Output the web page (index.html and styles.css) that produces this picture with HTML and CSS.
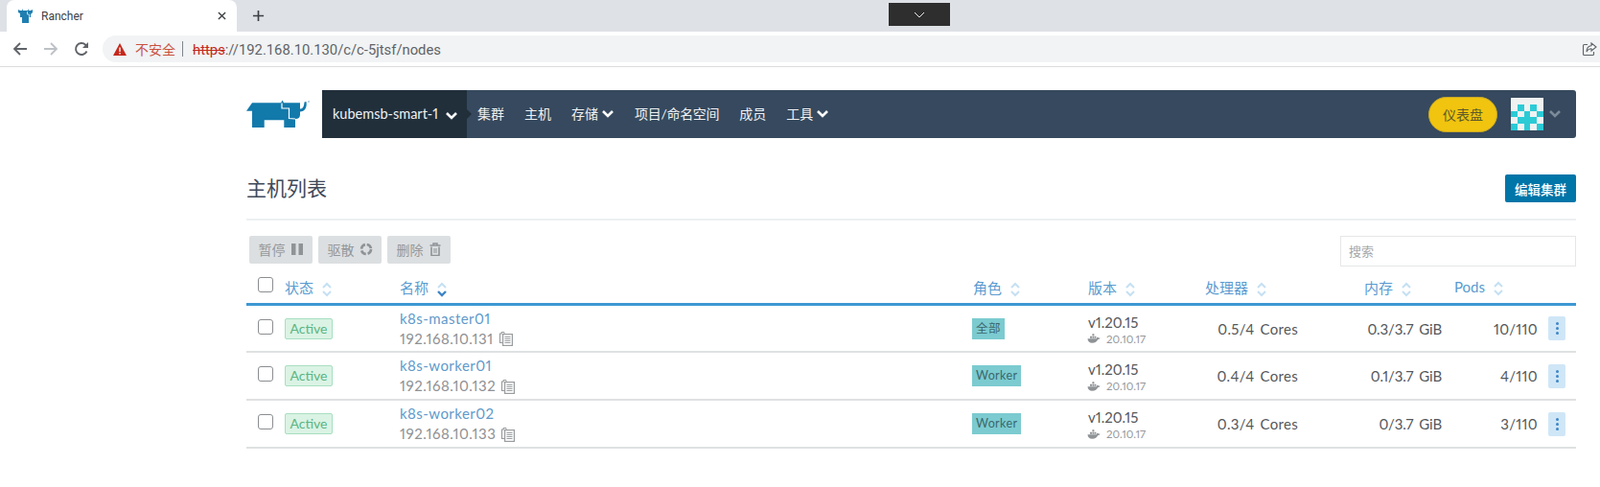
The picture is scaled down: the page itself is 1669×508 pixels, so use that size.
FILE: index.html
```html
<!DOCTYPE html>
<html lang="en">
<head>
    <meta charset="UTF-8">
    <meta name="viewport" content="width=device-width, initial-scale=1.0">
    <title>Rancher</title>
    <link rel="stylesheet" href="styles.css">
</head>
<body>
    <svg class="defs" width="0" height="0">
        <symbol id="sort" viewBox="0 0 12 16"><path d="M2 6l4-4 4 4M2 10l4 4 4-4" fill="none" stroke="currentColor" stroke-width="2"/></symbol>
        <symbol id="chev" viewBox="0 0 14 10"><path d="M2 2l5 5 5-5" fill="none" stroke="currentColor" stroke-width="2.6"/></symbol>
        <symbol id="copy" viewBox="0 0 15 16"><path d="M4 3H1.5v9.5H4" fill="none" stroke="#9a9d9f" stroke-width="1.2"/><path d="M3 3V1.5h3V3" fill="none" stroke="#9a9d9f"/><rect x="4.6" y="3.6" width="9.8" height="11.8" fill="#fff" stroke="#9a9d9f" stroke-width="1.2"/><path d="M6.5 6.5h6M6.5 8.5h6M6.5 10.5h6M6.5 12.5h6" stroke="#9a9d9f"/></symbol>
        <symbol id="whale" viewBox="0 0 14 10"><path d="M.5 5.2h9.3c.3-1 .9-1.5 1.7-1.3.2.5.9.7 2 .6-.4 1-1.2 1.5-2.2 1.6C10.300 8.400 8.300 9.800 5.300 9.800 2.300 9.800.8 8 .5 5.200z" fill="#8f9396"/><path d="M3 2.700h2v2H3zM5.400 2.700h2v2h-2zM5.400.3h2v2h-2zM7.800 2.700h1.600v2H7.800z" fill="#8f9396"/></symbol>
    </svg>

    <!-- browser chrome -->
    <div class="tabstrip">
        <div class="tab">
            <svg class="favicon" viewBox="0 0 16 16"><path d="M0 1l2 1h2V0l1 2h5l1-2v2h2l2-1v3l-2 2v3h-2v6H4V9H2V5L0 4z" fill="#1f7fb0"/><path d="M9.500 3v3h2v3" fill="none" stroke="#fff" stroke-width=".7"/></svg>
            <span class="tab-title">Rancher</span>
            <svg class="tab-close" viewBox="0 0 10 10"><path d="M1 1l8 8M9 1l-8 8" stroke="#3c4043" stroke-width="1.500"/></svg>
        </div>
        <svg class="newtab" viewBox="0 0 14 14"><path d="M7 1v12M1 7h12" stroke="#3c4043" stroke-width="1.800"/></svg>
        <div class="fullscreen-tab"><svg viewBox="0 0 12 7" width="12" height="7"><path d="M1 1l5 5 5-5" fill="none" stroke="#eee" stroke-width="1"/></svg></div>
    </div>
    <div class="toolbar">
        <svg class="tool back" viewBox="0 0 16 16"><path d="M15 8H2M8 2L2 8l6 6" fill="none" stroke="#5f6368" stroke-width="1.800"/></svg>
        <svg class="tool forward" viewBox="0 0 16 16"><path d="M1 8h13M8 2l6 6-6 6" fill="none" stroke="#bdc1c6" stroke-width="1.800"/></svg>
        <svg class="tool reload" viewBox="0 0 16 16"><path d="M13.500 10.500A6 6 0 1 1 12.200 3.700L14 5.500" fill="none" stroke="#5f6368" stroke-width="1.900"/><path d="M15 1v6H9z" fill="#5f6368"/></svg>
        <div class="omnibox">
            <svg class="warn" viewBox="0 0 14 13"><path d="M7 0l7 13H0z" fill="#c5291c"/><path d="M6.300 4.500h1.400v4.500H6.300zM6.300 10h1.400v1.500H6.300z" fill="#fff"/></svg>
            <span class="insecure">不安全</span>
            <span class="omni-sep"></span>
            <span class="url"><s class="scheme">https</s>://192.168.10.130/c/c-5jtsf/nodes</span>
            <svg class="share" viewBox="0 0 16 15"><path d="M6 2.500H2.500a1 1 0 0 0-1 1v9a1 1 0 0 0 1 1h9a1 1 0 0 0 1-1V10" fill="none" stroke="#5f6368" stroke-width="1.100"/><path d="M10 1l5 4-5 4V6.700C7.500 6.700 6 7.800 5 10c0-3.500 1.800-6 5-6.300z" fill="#fff" stroke="#5f6368" stroke-width="1.100"/></svg>
        </div>
    </div>

    <div class="page">
        <div class="topbar">
            <div class="logo-wrap">
                <svg class="logo" viewBox="0 0 66 31">
                    <path d="M0 12.700L6 4.300H36L37.700 1.500 39 4.300H56V10.500C58.500 10.500 60 9 60.500 3.500L62.500 3C63.500 9 61 13.500 56 13.500V16.500Q56 21 51 21V30H39.300V22.300H18.700V30H6V12.700z" fill="#1279ab"/>
                    <path d="M37 4.500V10H44.500V20.500L51 21" fill="none" stroke="#fff" stroke-width="1.200"/>
                    <circle cx="65" cy="3" r="1" fill="#a9c9dc"/>
                </svg>
            </div>
            <nav class="navbar">
                <div class="cluster">
                    <span>kubemsb-smart-1</span>
                    <svg class="chev"><use href="#chev"/></svg>
                </div>
                <a class="nav-link first">集群</a>
                <a class="nav-link">主机</a>
                <a class="nav-link">存储<svg class="chev"><use href="#chev"/></svg></a>
                <a class="nav-link tight">项目/命名空间</a>
                <a class="nav-link">成员</a>
                <a class="nav-link">工具<svg class="chev"><use href="#chev"/></svg></a>
                <button class="dashboard">仪表盘</button>
                <svg class="avatar" viewBox="0 0 5 5" shape-rendering="crispEdges">
                    <rect width="5" height="5" fill="#f0f2f2"/>
                    <path d="M1 1h1v1H1zM3 1h1v1H3zM0 2h1v1H0zM2 2h1v1H2zM4 2h1v1H4zM1 3h3v1H1zM0 4h1v1H0zM2 4h1v1H2zM4 4h1v1H4z" fill="#2bcbd6"/>
                </svg>
                <svg class="chev user-chev"><use href="#chev"/></svg>
            </nav>
        </div>

        <header class="page-head">
            <h1>主机列表</h1>
            <button class="edit-btn">编辑集群</button>
        </header>

        <div class="actions">
            <div class="bulk">
                <button class="bulk-btn">暂停<svg viewBox="0 0 14 14"><path d="M1 1h4.500v12H1zM8.500 1H13v12H8.500z" fill="#8f9396"/></svg></button>
                <button class="bulk-btn">驱散<svg viewBox="0 0 14 14"><circle cx="7" cy="7" r="5" fill="none" stroke="#8f9396" stroke-width="2.600" stroke-dasharray="6 1.900"/></svg></button>
                <button class="bulk-btn">删除<svg viewBox="0 0 14 14"><path d="M1.500 3h11M5 3V1h4v2" fill="none" stroke="#8f9396" stroke-width="1.500"/><path d="M3 4.500v9h8v-9" fill="none" stroke="#8f9396" stroke-width="1.600"/><path d="M6 6v5M8 6v5" stroke="#8f9396"/></svg></button>
            </div>
            <input class="search" placeholder="搜索">
        </div>

        <table class="nodes">
            <colgroup>
                <col class="c-check"><col class="c-state"><col class="c-name"><col class="c-role">
                <col class="c-ver"><col class="c-cpu"><col class="c-mem"><col class="c-pods"><col class="c-act">
            </colgroup>
            <thead>
                <tr>
                    <th><span class="check"></span></th>
                    <th>状态<svg class="sort"><use href="#sort"/></svg></th>
                    <th>名称<svg class="sort active" viewBox="0 0 12 16"><path d="M2 6l4-4 4 4" fill="none" stroke="#c5e0f3" stroke-width="2"/><path d="M2 10l4 4 4-4" fill="none" stroke="#3d85c6" stroke-width="2.400"/></svg></th>
                    <th class="th-role">角色<svg class="sort"><use href="#sort"/></svg></th>
                    <th>版本<svg class="sort"><use href="#sort"/></svg></th>
                    <th>处理器<svg class="sort"><use href="#sort"/></svg></th>
                    <th class="th-mem">内存<svg class="sort"><use href="#sort"/></svg></th>
                    <th class="th-pods">Pods<svg class="sort"><use href="#sort"/></svg></th>
                    <th></th>
                </tr>
            </thead>
            <tbody>
                <tr>
                    <td><span class="check"></span></td>
                    <td><span class="state">Active</span></td>
                    <td><a class="node-name">k8s-master01</a><div class="ip">192.168.10.131<svg class="copy"><use href="#copy"/></svg></div></td>
                    <td><span class="role">全部</span></td>
                    <td class="ver"><div>v1.20.15</div><div class="docker"><svg class="whale"><use href="#whale"/></svg>20.10.17</div></td>
                    <td class="num">0.5/4 Cores</td>
                    <td class="num mem">0.3/3.7 GiB</td>
                    <td class="num">10/110</td>
                    <td><button class="more"><i></i><i></i><i></i></button></td>
                </tr>
                <tr>
                    <td><span class="check"></span></td>
                    <td><span class="state">Active</span></td>
                    <td><a class="node-name">k8s-worker01</a><div class="ip">192.168.10.132<svg class="copy"><use href="#copy"/></svg></div></td>
                    <td><span class="role">Worker</span></td>
                    <td class="ver"><div>v1.20.15</div><div class="docker"><svg class="whale"><use href="#whale"/></svg>20.10.17</div></td>
                    <td class="num">0.4/4 Cores</td>
                    <td class="num mem">0.1/3.7 GiB</td>
                    <td class="num">4/110</td>
                    <td><button class="more"><i></i><i></i><i></i></button></td>
                </tr>
                <tr>
                    <td><span class="check"></span></td>
                    <td><span class="state">Active</span></td>
                    <td><a class="node-name">k8s-worker02</a><div class="ip">192.168.10.133<svg class="copy"><use href="#copy"/></svg></div></td>
                    <td><span class="role">Worker</span></td>
                    <td class="ver"><div>v1.20.15</div><div class="docker"><svg class="whale"><use href="#whale"/></svg>20.10.17</div></td>
                    <td class="num">0.3/4 Cores</td>
                    <td class="num mem">0/3.7 GiB</td>
                    <td class="num">3/110</td>
                    <td><button class="more"><i></i><i></i><i></i></button></td>
                </tr>
            </tbody>
        </table>
    </div>
</body>
</html>
```

FILE: styles.css
```css
* {
    box-sizing: border-box;
}

body {
    margin: 0;
    background: #fff;
    color: #55585b;
    font-family: Lato, "Noto Sans CJK SC", sans-serif;
    font-size: 15px;
    font-variant-numeric: proportional-nums;
    overflow: hidden;
}

.defs {
    position: absolute;
}

/* browser chrome */
.tabstrip {
    height: 33px;
    background: #dee1e6;
    display: flex;
    align-items: flex-end;
    position: relative;
}

.tab {
    width: 240px;
    height: 33px;
    margin-left: 7px;
    padding: 0 11px 0 12px;
    background: #fff;
    border-radius: 8px 8px 0 0;
    display: flex;
    align-items: center;
}

.favicon {
    width: 16px;
    height: 16px;
}

.tab-title {
    flex: 1;
    margin-left: 8px;
    font: 12px Roboto, sans-serif;
    color: #3c4043;
}

.tab-close {
    width: 9px;
    height: 9px;
}

.newtab {
    width: 13px;
    height: 13px;
    margin: 0 0 10px 16px;
}

.fullscreen-tab {
    position: absolute;
    left: 927px;
    top: 3px;
    width: 64px;
    height: 24px;
    background: #2e2e2e;
    display: flex;
    align-items: center;
    justify-content: center;
}

.toolbar {
    height: 37px;
    padding-top: 4px;
    border-bottom: 1px solid #dcdcdc;
    display: flex;
    align-items: flex-start;
}

.tool {
    width: 16px;
    height: 16px;
    margin: 6px 0 0 16px;
}

.tool.back {
    margin-left: 13px;
}

.omnibox {
    flex: 1;
    height: 28px;
    margin-left: 14px;
    padding-left: 11px;
    background: #f1f3f4;
    border-radius: 14px 0 0 14px;
    display: flex;
    align-items: center;
}

.warn {
    width: 14px;
    height: 13px;
}

.insecure {
    margin-left: 9px;
    font: 14px "Noto Sans CJK SC", sans-serif;
    color: #c9503f;
}

.omni-sep {
    width: 1px;
    height: 16px;
    margin: 0 10px 0 7px;
    background: #80868b;
}

.url {
    flex: 1;
    padding-top: 1px;
    font: 14.800px Roboto, sans-serif;
    color: #5f6368;
}

.scheme {
    color: #c5291c;
}

.share {
    width: 16px;
    height: 15px;
    margin-right: 3px;
}

/* page */
.page {
    margin: 24px 25px 0 257px;
}

.topbar {
    display: flex;
    height: 50px;
}

.logo-wrap {
    width: 79px;
    padding-top: 9px;
}

.logo {
    width: 66px;
    height: 31px;
    display: block;
}

.navbar {
    flex: 1;
    background: #36495e;
    border-radius: 0 3px 3px 0;
    display: flex;
    align-items: center;
    color: #fff;
    font-size: 14px;
}

.cluster {
    width: 151px;
    height: 50px;
    padding: 0 0 2px 11px;
    background: #212f3b;
    display: flex;
    align-items: center;
    position: relative;
    font-size: 14.500px;
    color: #eef1f3;
}

.cluster::after {
    content: "";
    position: absolute;
    right: -5px;
    top: 20px;
    border-left: 5px solid #212f3b;
    border-top: 5px solid transparent;
    border-bottom: 5px solid transparent;
}

.chev {
    width: 14px;
    height: 10px;
    margin-left: 3px;
    color: #fff;
    flex: none;
}

.cluster .chev {
    margin-left: 7px;
    margin-top: 5px;
}

.nav-link {
    margin-left: 21px;
    padding-bottom: 3px;
    display: flex;
    align-items: center;
    color: #eef1f3;
}

.nav-link .chev {
    margin-top: 3px;
}

.nav-link.first {
    margin-left: 11px;
}

.nav-link.tight {
    letter-spacing: -.3px;
}

.dashboard {
    margin-left: auto;
    width: 72px;
    height: 37px;
    border: 1px solid #c9a825;
    border-radius: 19px;
    background: #f1c40f;
    color: #5d5a2a;
    font: 14px "Noto Sans CJK SC", sans-serif;
}

.avatar {
    width: 34px;
    height: 34px;
    margin-left: 14px;
}

.user-chev {
    margin: 0 15px 0 5px;
    color: #7c8b9a;
}

.page-head {
    margin-top: 38px;
    padding-bottom: 17px;
    border-bottom: 2px solid #edf0f1;
    display: flex;
    justify-content: space-between;
    align-items: center;
    height: 48px;
}

.page-head h1 {
    margin: 0 0 4px;
    font-size: 21px;
    font-weight: 400;
    color: #3f4a5a;
}

.edit-btn {
    width: 74px;
    height: 29px;
    border: none;
    border-radius: 2px;
    background: #0075a8;
    color: #fff;
    font: 500 13.500px "Noto Sans CJK SC", sans-serif;
}

.actions {
    margin-top: 16px;
    padding-left: 3px;
    display: flex;
    justify-content: space-between;
    align-items: flex-start;
}

.bulk {
    display: flex;
    gap: 6px;
}

.bulk-btn {
    width: 66px;
    height: 29px;
    padding: 0 0 2px;
    border: none;
    border-radius: 2px;
    background: #dcdfe1;
    color: #95989a;
    font: 14px "Noto Sans CJK SC", sans-serif;
    display: flex;
    align-items: center;
    justify-content: center;
    gap: 5px;
}

.bulk-btn svg {
    width: 14px;
    height: 14px;
}

.search {
    width: 246px;
    height: 32px;
    padding: 0 8px 2px;
    border: 1px solid #e4e7e8;
    font: 13px "Noto Sans CJK SC", sans-serif;
    outline: none;
}

.search::placeholder {
    color: #a5a7a9;
}

/* hosts table */
.nodes {
    width: 100%;
    table-layout: fixed;
    border-collapse: separate;
    border-spacing: 0;
}

.c-check { width: 40px; }
.c-state { width: 120px; }
.c-name { width: 597px; }
.c-role { width: 121px; }
.c-ver { width: 122px; }
.c-cpu { width: 97px; }
.c-mem { width: 150px; }
.c-pods { width: 100px; }
.c-act { width: 40px; }

.nodes th {
    height: 41px;
    padding: 4px 0 0;
    border-bottom: 3px solid #3d98d3;
    text-align: left;
    font-weight: 400;
    font-size: 15px;
    color: #5a9bd0;
}

.th-role {
    padding-left: 1px !important;
}

.th-mem {
    padding-left: 69px !important;
}

.th-pods {
    padding-left: 13px !important;
}

.sort {
    width: 12px;
    height: 16px;
    margin-left: 8px;
    color: #c5e0f3;
    vertical-align: -4px;
}

.nodes td {
    height: 50px;
    padding: 0;
    border-bottom: 2px solid #dfe1e2;
    vertical-align: middle;
}

.nodes tbody tr:first-child td {
    height: 49px;
}

.check {
    display: block;
    width: 16px;
    height: 16px;
    margin: 0 0 4px 12px;
    border: 1.500px solid #8b8e91;
    border-radius: 3px;
    background: #fff;
}

.state {
    display: inline-block;
    width: 50px;
    height: 22px;
    border: 1px solid #a8dfc1;
    border-radius: 2px;
    background: #daf3e4;
    color: #5cb584;
    font-size: 14px;
    line-height: 20px;
    text-align: center;
}

.node-name {
    display: block;
    line-height: 21px;
    letter-spacing: .45px;
    color: #5f9acb;
}

.ip {
    line-height: 21px;
    letter-spacing: .5px;
    color: #8f9295;
    display: flex;
    align-items: center;
}

.copy {
    width: 15px;
    height: 16px;
    margin-left: 5px;
}

.role {
    display: inline-block;
    height: 22px;
    padding: 0 4px;
    background: #7bcbd0;
    color: #3c676d;
    font-size: 12.500px;
    line-height: 22px;
    letter-spacing: .4px;
}

.ver {
    padding-top: 4px !important;
    line-height: 17px;
}

.docker {
    display: flex;
    align-items: center;
    font-size: 11.500px;
    color: #96999c;
}

.whale {
    width: 14px;
    height: 10px;
    margin-right: 6px;
    margin-left: -1px;
}

.num {
    text-align: right;
    white-space: nowrap;
    word-spacing: 2px;
    letter-spacing: .3px;
}

.num.mem {
    letter-spacing: -.1px;
}

.more {
    display: flex;
    flex-direction: column;
    align-items: center;
    justify-content: center;
    gap: 2px;
    width: 18px;
    height: 25px;
    margin-left: 11px;
    padding: 0;
    border: none;
    border-radius: 2px;
    background: #cfe6f7;
}

.more i {
    width: 3px;
    height: 3px;
    border-radius: 50%;
    background: #3d85c6;
}
```
